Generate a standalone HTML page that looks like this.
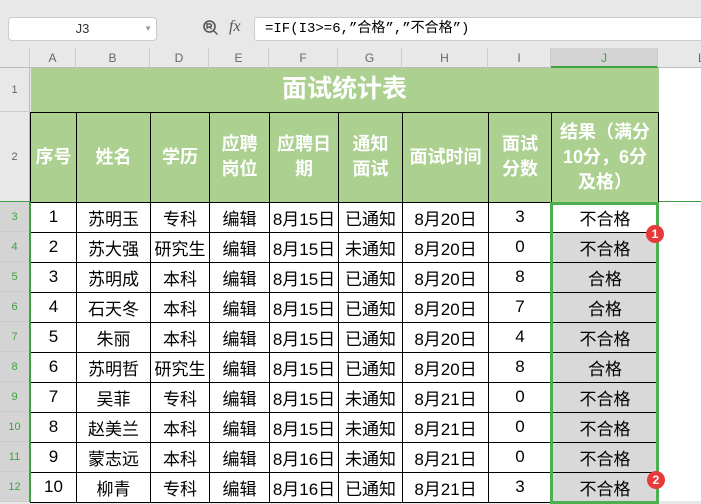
<!DOCTYPE html>
<html><head><meta charset="utf-8"><style>
*{margin:0;padding:0;box-sizing:border-box}
body{width:701px;height:501px;overflow:hidden;background:#e8e8e8;font-family:"Liberation Sans","Noto Sans CJK SC",sans-serif;position:relative}
.abs{position:absolute}
#namebox{left:8px;top:17px;width:149px;height:24px;background:#fff;border:1px solid #ccc;border-radius:4px;font-size:13px;color:#333;text-align:center;line-height:22px}
#fbox{left:254px;top:17px;width:460px;height:24px;background:#fff;border:1px solid #ccc;border-radius:3px 0 0 3px;font-size:14px;line-height:22px;padding-left:10px;font-family:"Liberation Mono","Noto Sans CJK SC",monospace;color:#000}
.colh{top:48px;height:20px;background:#e8e8e8;border-right:1px solid #ccc;border-bottom:1px solid #bbb;font-size:12px;color:#666;text-align:center;line-height:20px}
.rowh{left:0;width:30px;background:#e8e8e8;border-bottom:1px solid #ccc;border-right:1px solid #bbb;font-size:11px;color:#666;text-align:center}
table{position:absolute;left:30px;top:68px;border-collapse:collapse;table-layout:fixed}
td{border:1px solid #000;text-align:center;font-size:17px;color:#000;padding:0;overflow:hidden;white-space:nowrap;background:#fff}
.g td{background:#acd08f;color:#fff;font-weight:bold;font-size:18px;line-height:25px;white-space:normal}
.badge{width:18px;height:18px;border-radius:50%;background:#e83a3a;color:#fff;font-size:12px;font-weight:bold;text-align:center;line-height:18px}
</style></head><body>
<div class="abs" id="namebox">J3<span style="position:absolute;right:4px;top:0;font-size:8px;color:#999">▼</span></div>
<svg class="abs" style="left:202px;top:19px" width="18" height="18" viewBox="0 0 18 18"><circle cx="7.5" cy="7.5" r="5.5" fill="none" stroke="#555" stroke-width="1.6"/><path d="M5 5h3a1.5 1.5 0 0 1 0 3H5M5 4v6M7.5 8l2 2M11.5 11.5l4 4" fill="none" stroke="#555" stroke-width="1.4"/></svg>
<div class="abs" style="left:229px;top:18px;font-size:16px;font-style:italic;color:#555;font-family:'Liberation Serif',serif">fx</div>
<div class="abs" id="fbox">=IF(I3&gt;=6,”合格”,”不合格”)</div>
<div class="abs" style="left:0;top:48px;width:30px;height:20px;background:#e8e8e8;border-right:1px solid #ccc;border-bottom:1px solid #bbb"></div>
<div class="abs colh" style="left:30px;width:46px">A</div>
<div class="abs colh" style="left:76px;width:74px">B</div>
<div class="abs colh" style="left:150px;width:59px">D</div>
<div class="abs colh" style="left:209px;width:60px">E</div>
<div class="abs colh" style="left:269px;width:69px">F</div>
<div class="abs colh" style="left:338px;width:64px">G</div>
<div class="abs colh" style="left:402px;width:86px">H</div>
<div class="abs colh" style="left:488px;width:63px">I</div>
<div class="abs colh" style="left:551px;width:107px;background:#d4d4d4;border-bottom:2px solid #3fa142;color:#3fa142">J</div>
<div class="abs colh" style="left:658px;width:50px;text-align:left;padding-left:40px">L</div>
<div class="abs" style="left:658px;top:68px;width:43px;height:433px;background:#fff"></div>
<div class="abs" style="left:658px;top:201px;width:43px;height:1px;background:#3fa142"></div>
<div class="abs rowh" style="top:68px;height:44px;line-height:44px">1</div>
<div class="abs rowh" style="top:112px;height:90px;line-height:90px">2</div>
<div class="abs rowh" style="top:202px;height:30px;line-height:30px;color:#3fa142;background:#d4d4d4">3</div>
<div class="abs rowh" style="top:232px;height:30px;line-height:30px;color:#3fa142;background:#d4d4d4">4</div>
<div class="abs rowh" style="top:262px;height:30px;line-height:30px;color:#3fa142;background:#d4d4d4">5</div>
<div class="abs rowh" style="top:292px;height:30px;line-height:30px;color:#3fa142;background:#d4d4d4">6</div>
<div class="abs rowh" style="top:322px;height:30px;line-height:30px;color:#3fa142;background:#d4d4d4">7</div>
<div class="abs rowh" style="top:352px;height:30px;line-height:30px;color:#3fa142;background:#d4d4d4">8</div>
<div class="abs rowh" style="top:382px;height:30px;line-height:30px;color:#3fa142;background:#d4d4d4">9</div>
<div class="abs rowh" style="top:412px;height:30px;line-height:30px;color:#3fa142;background:#d4d4d4">10</div>
<div class="abs rowh" style="top:442px;height:30px;line-height:30px;color:#3fa142;background:#d4d4d4">11</div>
<div class="abs rowh" style="top:472px;height:30px;line-height:30px;color:#3fa142;background:#d4d4d4">12</div>
<div class="abs" style="left:0;top:201px;width:30px;height:1px;background:#3fa142"></div>
<table>
<colgroup><col style="width:46px"><col style="width:74px"><col style="width:59px"><col style="width:60px"><col style="width:69px"><col style="width:64px"><col style="width:86px"><col style="width:63px"><col style="width:107px"></colgroup>
<tr class="g" style="height:44px"><td colspan="9" style="font-size:25px;border-top:none;border-left:none;border-right:none">面试统计表</td></tr>
<tr class="g" style="height:90px"><td>序号</td><td>姓名</td><td>学历</td><td>应聘<br>岗位</td><td>应聘日<br>期</td><td>通知<br>面试</td><td>面试时间</td><td>面试<br>分数</td><td>结果（满分<br>10分，6分<br>及格）</td></tr>
<tr style="height:30px"><td>1</td><td>苏明玉</td><td>专科</td><td>编辑</td><td>8月15日</td><td>已通知</td><td>8月20日</td><td>3</td><td style="background:#fff">不合格</td></tr>
<tr style="height:30px"><td>2</td><td>苏大强</td><td>研究生</td><td>编辑</td><td>8月15日</td><td>未通知</td><td>8月20日</td><td>0</td><td style="background:#d9d9d9">不合格</td></tr>
<tr style="height:30px"><td>3</td><td>苏明成</td><td>本科</td><td>编辑</td><td>8月15日</td><td>已通知</td><td>8月20日</td><td>8</td><td style="background:#d9d9d9">合格</td></tr>
<tr style="height:30px"><td>4</td><td>石天冬</td><td>本科</td><td>编辑</td><td>8月15日</td><td>已通知</td><td>8月20日</td><td>7</td><td style="background:#d9d9d9">合格</td></tr>
<tr style="height:30px"><td>5</td><td>朱丽</td><td>本科</td><td>编辑</td><td>8月15日</td><td>已通知</td><td>8月20日</td><td>4</td><td style="background:#d9d9d9">不合格</td></tr>
<tr style="height:30px"><td>6</td><td>苏明哲</td><td>研究生</td><td>编辑</td><td>8月15日</td><td>已通知</td><td>8月20日</td><td>8</td><td style="background:#d9d9d9">合格</td></tr>
<tr style="height:30px"><td>7</td><td>吴菲</td><td>专科</td><td>编辑</td><td>8月15日</td><td>未通知</td><td>8月21日</td><td>0</td><td style="background:#d9d9d9">不合格</td></tr>
<tr style="height:30px"><td>8</td><td>赵美兰</td><td>本科</td><td>编辑</td><td>8月15日</td><td>未通知</td><td>8月21日</td><td>0</td><td style="background:#d9d9d9">不合格</td></tr>
<tr style="height:30px"><td>9</td><td>蒙志远</td><td>本科</td><td>编辑</td><td>8月16日</td><td>未通知</td><td>8月21日</td><td>0</td><td style="background:#d9d9d9">不合格</td></tr>
<tr style="height:30px"><td>10</td><td>柳青</td><td>专科</td><td>编辑</td><td>8月16日</td><td>已通知</td><td>8月21日</td><td>3</td><td style="background:#d9d9d9">不合格</td></tr>
</table>
<div class="abs" style="left:29px;top:202px;width:2px;height:300px;background:#3fa142"></div>
<div class="abs" style="left:550px;top:202px;width:109px;height:302px;border:3px solid #4caf50"></div>
<div class="abs badge" style="left:646px;top:225px">1</div>
<div class="abs badge" style="left:647px;top:471px">2</div>
</body></html>
